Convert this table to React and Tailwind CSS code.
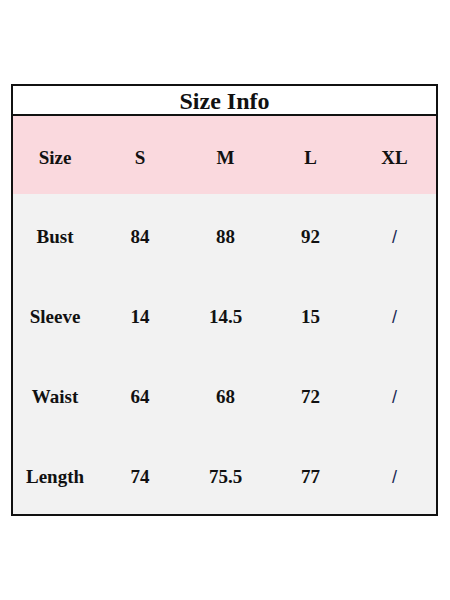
import React from 'react';

const rows = [
  ['Bust', '84', '88', '92', '/'],
  ['Sleeve', '14', '14.5', '15', '/'],
  ['Waist', '64', '68', '72', '/'],
  ['Length', '74', '75.5', '77', '/'],
];

const Cell = ({ children }) => {
  const slash = children === '/';
  return (
    <div className="flex items-center justify-center pt-[6px]">
      <span
        className={slash ? 'text-[18px] font-normal text-[#1b2a55]' : 'text-[19px] font-bold text-[#111]'}
        style={{ fontFamily: slash ? '"Liberation Sans", Arial, sans-serif' : undefined }}
      >
        {children}
      </span>
    </div>
  );
};

const App = () => {
  return (
    <div className="w-[450px] h-[600px] bg-white pt-[84px] pl-[11px]" style={{ fontFamily: '"Liberation Serif", "Times New Roman", serif' }}>
      <div className="w-[427px] border-2 border-[#111]">
        <div className="h-[30px] border-b-2 border-[#111] flex items-center justify-center pt-[2px]">
          <span className="text-[24px] font-bold text-[#111] leading-none">Size Info</span>
        </div>
        <div className="grid grid-cols-[84px_86px_85px_85px_1fr] h-[78px] bg-[#fad9de]">
          {['Size', 'S', 'M', 'L', 'XL'].map((h) => (
            <Cell key={h}>{h}</Cell>
          ))}
        </div>
        <div className="bg-[#f2f2f2]">
          {rows.map((r) => (
            <div key={r[0]} className="grid grid-cols-[84px_86px_85px_85px_1fr] h-[80px]">
              {r.map((c, i) => (
                <Cell key={i}>{c}</Cell>
              ))}
            </div>
          ))}
        </div>
      </div>
    </div>
  );
};

export default App;
